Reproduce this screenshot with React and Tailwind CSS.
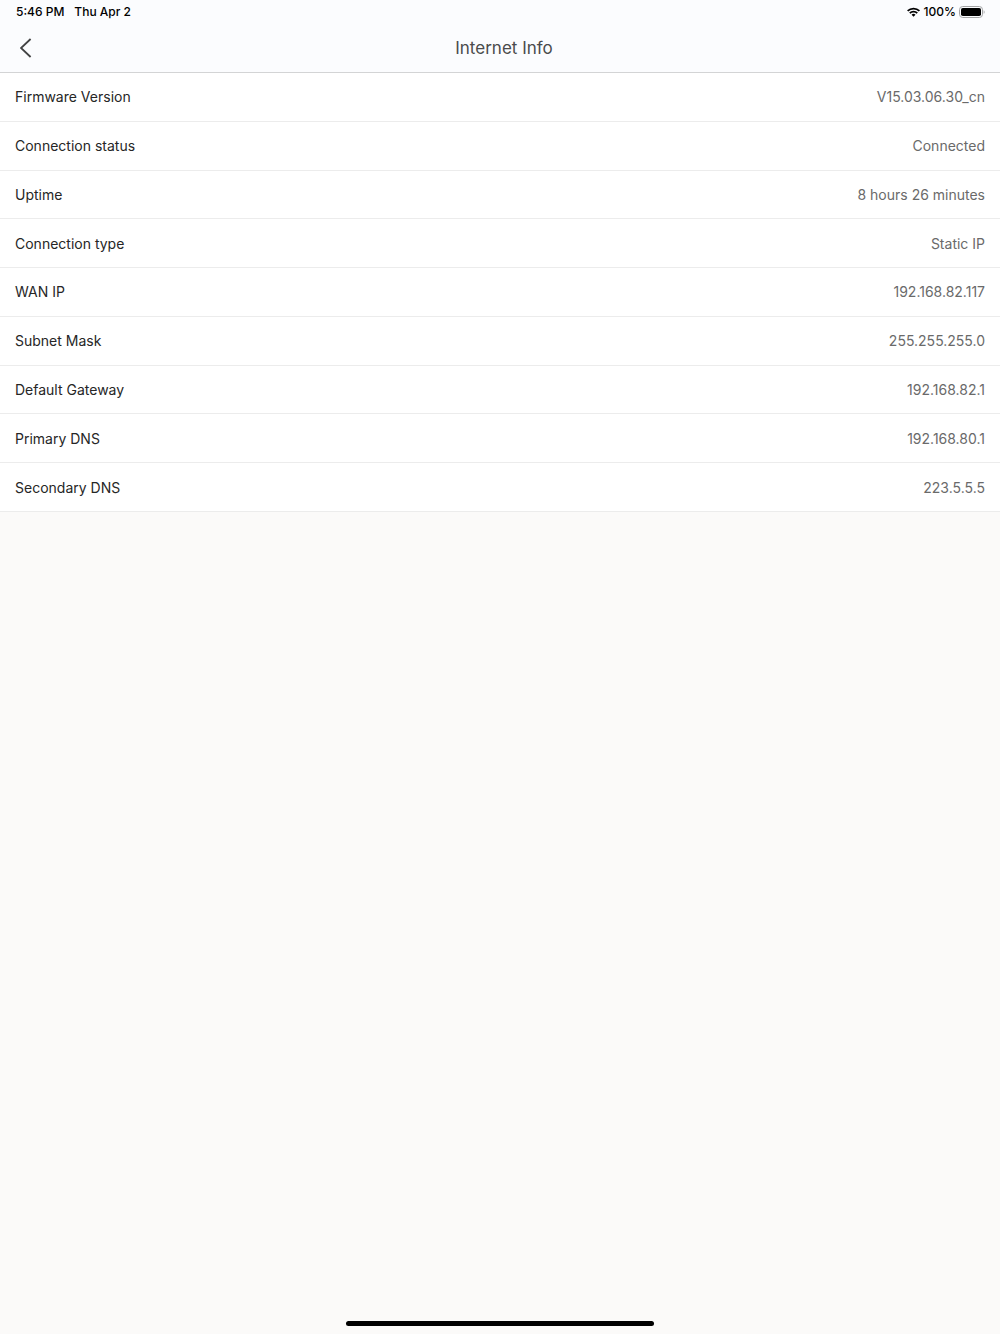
const infoRows = [
    { label: 'Firmware Version', value: 'V15.03.06.30_cn' },
    { label: 'Connection status', value: 'Connected' },
    { label: 'Uptime', value: '8 hours 26 minutes' },
    { label: 'Connection type', value: 'Static IP' },
    { label: 'WAN IP', value: '192.168.82.117' },
    { label: 'Subnet Mask', value: '255.255.255.0' },
    { label: 'Default Gateway', value: '192.168.82.1' },
    { label: 'Primary DNS', value: '192.168.80.1' },
    { label: 'Secondary DNS', value: '223.5.5.5' },
];

const WifiIcon = () => (
    <svg width="14" height="10" viewBox="0 0 15 10" fill="none" stroke="#000" strokeWidth="1.9" aria-hidden="true">
        <path d="M0.7 3.9a8.9 8.9 0 0 1 12.6 0" />
        <path d="M3 6.3a5.7 5.7 0 0 1 8 0" />
        <path d="M7 10L4.9 7.9a3 3 0 0 1 4.2 0z" fill="#000" stroke="none" />
    </svg>
);

const BatteryIcon = () => (
    <svg width="26" height="12" viewBox="0 0 26 12" fill="none" aria-hidden="true">
        <rect x="0.5" y="0.5" width="23" height="11" rx="3.2" stroke="#a3a4a5" />
        <rect x="2" y="2" width="20" height="8" rx="1.8" fill="#000" />
        <path d="M24.7 4.2c1.2.5 1.2 3.1 0 3.6z" fill="#a3a4a5" />
    </svg>
);

const StatusBar = () => (
    <div className="flex h-6 items-center justify-between pl-4 pr-[15px] text-xs font-medium text-black">
        <div className="flex gap-[10px]">
            <span>5:46 PM</span>
            <span>Thu Apr 2</span>
        </div>
        <div className="flex items-center gap-[3px]">
            <WifiIcon />
            <span>100%</span>
            <BatteryIcon />
        </div>
    </div>
);

const NavBar = () => (
    <div className="grid h-12 grid-cols-[48px_1fr_40px] items-center">
        <button type="button" aria-label="Back" className="flex h-full items-center pl-5">
            <svg width="12" height="20" viewBox="0 0 12 20" fill="none" stroke="#414243" strokeWidth="1.8">
                <path d="M10.6 1L1 10L10.6 19" />
            </svg>
        </button>
        <h1 className="pt-[2px] text-center text-[17px] text-[#4a4b4c]">Internet Info</h1>
    </div>
);

const App = () => {
    return (
        <div className="flex min-h-screen flex-col bg-[#fbfaf9] font-['Inter',sans-serif]">
            <header className="border-b border-[#d3d4d5] bg-[#fbfcfe]">
                <StatusBar />
                <NavBar />
            </header>

            <main className="flex-1">
                <dl className="grid min-h-[439px] auto-rows-fr">
                    {infoRows.map((row) => (
                        <div
                            key={row.label}
                            className="flex items-center justify-between border-b border-[#ececec] bg-white px-[15px] pt-px text-sm"
                        >
                            <dt className="text-[#262626]">{row.label}</dt>
                            <dd className="text-[#6a6a6a]">{row.value}</dd>
                        </div>
                    ))}
                </dl>
            </main>

            <div className="flex justify-center pb-2">
                <div className="h-[5px] w-[308px] rounded-full bg-black"></div>
            </div>
        </div>
    );
};

export default App;
